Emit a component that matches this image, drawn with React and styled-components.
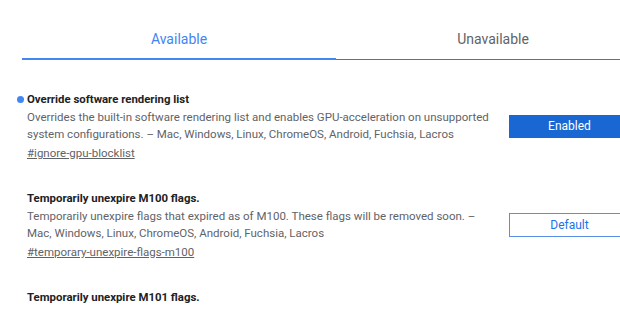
import styled, { createGlobalStyle } from "styled-components";

const flags = [
  {
    title: "Override software rendering list",
    desc: "Overrides the built-in software rendering list and enables GPU-acceleration on unsupported system configurations. – Mac, Windows, Linux, ChromeOS, Android, Fuchsia, Lacros",
    link: "#ignore-gpu-blocklist",
    value: "Enabled",
    modified: true,
  },
  {
    title: "Temporarily unexpire M100 flags.",
    desc: "Temporarily unexpire flags that expired as of M100. These flags will be removed soon. – Mac, Windows, Linux, ChromeOS, Android, Fuchsia, Lacros",
    link: "#temporary-unexpire-flags-m100",
    value: "Default",
  },
  {
    title: "Temporarily unexpire M101 flags.",
    desc: "Temporarily unexpire flags that expired as of M101. These flags will be removed soon. – Mac, Windows, Linux, ChromeOS, Android, Fuchsia, Lacros",
    link: "#temporary-unexpire-flags-m101",
    value: "Default",
  },
];

export default function App() {
  return (
    <>
      <GlobalStyle />
      <StyledPage>
        <StyledTabs>
          <StyledTab $active>Available</StyledTab>
          <StyledTab>Unavailable</StyledTab>
        </StyledTabs>
        <StyledList>
          {flags.map((flag) => (
            <StyledFlag key={flag.link}>
              <div>
                <StyledTitle $modified={flag.modified}>{flag.title}</StyledTitle>
                <StyledDesc>{flag.desc}</StyledDesc>
                <StyledLink href={flag.link}>{flag.link}</StyledLink>
              </div>
              <StyledSelect $enabled={flag.value === "Enabled"}>
                {flag.value}
              </StyledSelect>
            </StyledFlag>
          ))}
        </StyledList>
      </StyledPage>
    </>
  );
}

const GlobalStyle = createGlobalStyle`
  html, body {
    margin: 0;
    background: #ffffff;
    overflow: hidden;
  }
  body {
    font-family: Roboto, "Liberation Sans", sans-serif;
  }
`;

const StyledPage = styled.div`
  width: 620px;
  height: 309px;
  overflow: hidden;
`;

const StyledTabs = styled.div`
  display: flex;
  margin: 17px 0 0 22px;
  width: 628px;
`;

const StyledTab = styled.div`
  flex: 0 0 314px;
  height: 43px;
  display: flex;
  align-items: center;
  justify-content: center;
  font-size: 14px;
  color: ${(p) => (p.$active ? "#4285f4" : "#5f6368")};
  box-shadow: ${(p) =>
    p.$active ? "inset 0 -2px 0 #4285f4" : "inset 0 -1px 0 #6f6f6f"};
`;

const StyledList = styled.div`
  display: flex;
  flex-direction: column;
  gap: 27px;
  padding: 30px 0 0 27px;
`;

const StyledFlag = styled.div`
  display: grid;
  grid-template-columns: 470px 121px;
  column-gap: 12px;
  align-items: center;
`;

const StyledTitle = styled.div`
  position: relative;
  font-size: 11.4px;
  font-weight: 700;
  line-height: 19px;
  color: #202124;

  &::before {
    content: "";
    display: ${(p) => (p.$modified ? "block" : "none")};
    position: absolute;
    left: -10px;
    top: 6px;
    width: 7px;
    height: 7px;
    border-radius: 50%;
    background: #4285f4;
  }
`;

const StyledDesc = styled.div`
  font-size: 11.5px;
  line-height: 17px;
  color: #5f6368;
`;

const StyledLink = styled.a`
  display: block;
  margin-top: 1px;
  font-size: 11.5px;
  line-height: 18px;
  color: #5f6368;
  text-decoration: underline;
`;

const StyledSelect = styled.div`
  box-sizing: border-box;
  height: ${(p) => (p.$enabled ? "23px" : "24px")};
  display: flex;
  align-items: center;
  justify-content: center;
  font-size: 12px;
  background: ${(p) => (p.$enabled ? "#1967d2" : "#ffffff")};
  color: ${(p) => (p.$enabled ? "#ffffff" : "#1a73e8")};
  border: 1px solid ${(p) => (p.$enabled ? "#1967d2" : "#5b8fe6")};
`;
